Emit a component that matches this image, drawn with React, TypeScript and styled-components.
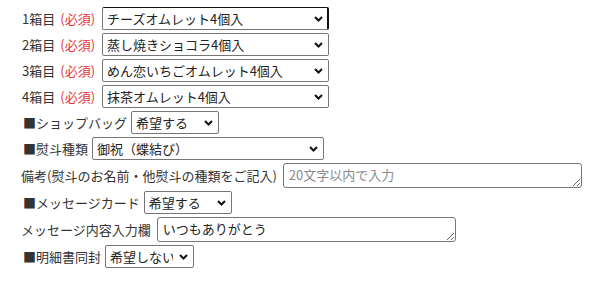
import React from "react";
import styled, { createGlobalStyle } from "styled-components";

const GlobalStyle = createGlobalStyle`
  body {
    margin: 0;
    background: #fff;
    font-family: "Noto Sans CJK JP", "Noto Sans", sans-serif;
    font-size: 13px;
    color: #333;
  }
`;

const Form = styled.div`
  display: flex;
  flex-direction: column;
  gap: 3px;
  padding: 7px 0 0 22px;
`;

const Row = styled.div<{ $gap?: number }>`
  display: flex;
  flex-direction: row;
  align-items: center;
  gap: ${(p) => p.$gap ?? 4}px;
`;

const Label = styled.span<{ $indent?: number }>`
  white-space: nowrap;
  line-height: 18px;
  margin-left: ${(p) => p.$indent ?? 0}px;
`;

const Required = styled.span`
  color: #e8333a;
  margin-left: 5px;
`;

const SelectWrap = styled.div<{ $width: number }>`
  position: relative;
  width: ${(p) => p.$width}px;
  height: 23px;
`;

const Select = styled.select<{ $focused?: boolean }>`
  appearance: none;
  width: 100%;
  height: 100%;
  box-sizing: border-box;
  margin: 0;
  padding: 0 20px 0 4px;
  font-family: "Noto Sans CJK JP", "Noto Sans", sans-serif;
  font-size: 13px;
  color: #222;
  background: #fff;
  border: 1px solid #767676;
  border-color: ${(p) =>
    p.$focused ? "#111 #111 #767676 #767676" : "#767676"};
  border-right-width: ${(p) => (p.$focused ? 2 : 1)}px;
  border-radius: 2px;
  outline: none;
`;

const Chevron = styled.svg`
  position: absolute;
  right: 6px;
  top: 9px;
  pointer-events: none;
`;

const TextArea = styled.textarea<{ $width: number }>`
  width: ${(p) => p.$width}px;
  height: 25px;
  box-sizing: border-box;
  margin: 0;
  padding: 2px 5px;
  font-family: "Noto Sans CJK JP", "Noto Sans", sans-serif;
  font-size: 13px;
  line-height: 18px;
  color: #222;
  border: 1px solid #767676;
  border-radius: 3px;
  overflow: hidden;

  &::placeholder {
    color: #8a8a8a;
  }
`;

type DropdownProps = {
  width: number;
  value: string;
  focused?: boolean;
};

const Dropdown = ({ width, value, focused }: DropdownProps) => (
  <SelectWrap $width={width}>
    <Select $focused={focused} defaultValue={value}>
      <option>{value}</option>
    </Select>
    <Chevron width="9" height="6" viewBox="0 0 9 6">
      <path d="M1 1 L4.5 4.5 L8 1" fill="none" stroke="#111" strokeWidth="2" />
    </Chevron>
  </SelectWrap>
);

const boxes = [
  "チーズオムレット4個入",
  "蒸し焼きショコラ4個入",
  "めん恋いちごオムレット4個入",
  "抹茶オムレット4個入",
];

const App = () => {
  return (
    <>
      <GlobalStyle />
      <Form>
        {boxes.map((item, i) => (
          <Row key={item} $gap={7}>
            <Label>
              {i + 1}箱目<Required>(必須)</Required>
            </Label>
            <Dropdown width={227} value={item} focused={i === 0} />
          </Row>
        ))}
        <Row $gap={4}>
          <Label $indent={1}>■ショップバッグ</Label>
          <Dropdown width={88} value="希望する" />
        </Row>
        <Row $gap={4}>
          <Label $indent={1}>■熨斗種類</Label>
          <Dropdown width={232} value="御祝（蝶結び）" />
        </Row>
        <Row $gap={6}>
          <Label $indent={-1}>備考(熨斗のお名前・他熨斗の種類をご記入)</Label>
          <TextArea $width={299} placeholder="20文字以内で入力" />
        </Row>
        <Row $gap={4}>
          <Label $indent={1}>■メッセージカード</Label>
          <Dropdown width={88} value="希望する" />
        </Row>
        <Row $gap={6}>
          <Label $indent={-1}>メッセージ内容入力欄</Label>
          <TextArea $width={299} defaultValue="いつもありがとう" />
        </Row>
        <Row $gap={4}>
          <Label $indent={1}>■明細書同封</Label>
          <Dropdown width={89} value="希望しない" />
        </Row>
      </Form>
    </>
  );
};

export default App;
